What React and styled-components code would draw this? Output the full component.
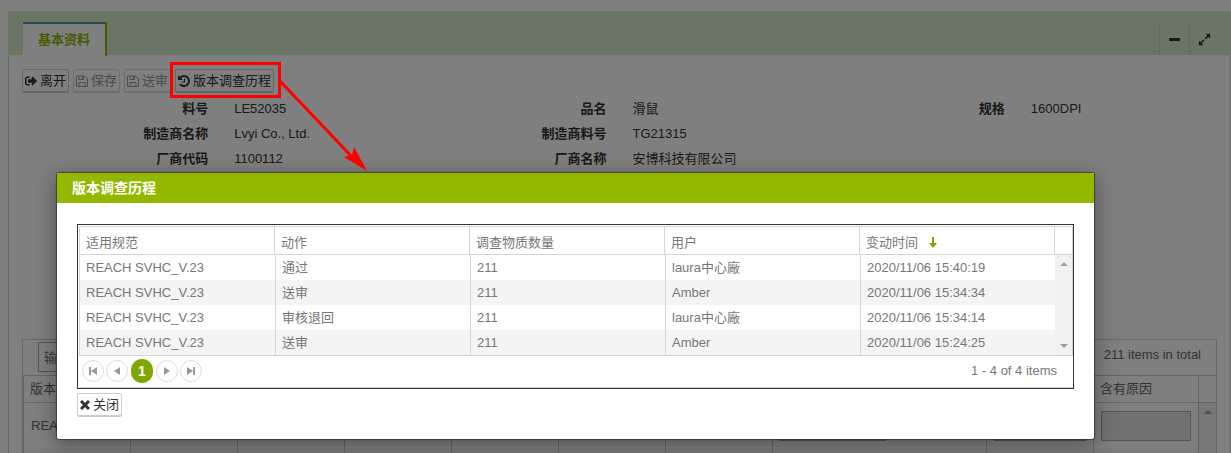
import React from "react";
import styled, { createGlobalStyle } from "styled-components";
import { FaSignOutAlt, FaExpandAlt } from "react-icons/fa";

const Global = createGlobalStyle`
  * { box-sizing: border-box; }
  html { height: 100%; }
  body {
    margin: 0;
    height: 100%;
    overflow: hidden;
    background: #fff;
    color: #333;
    font: 13px/18px "Liberation Sans", Arial, "Noto Sans CJK SC", sans-serif;
  }
  #root { height: 100%; }
  button, input { font: inherit; }
`;

const Page = styled.div`
  position: relative;
  height: 100%;
  overflow: hidden;
  padding: 11px 0 0 8px;
`;

const PanelHeader = styled.header`
  display: flex;
  align-items: flex-end;
  justify-content: space-between;
  height: 44px;
  padding: 0 12px 0 15px;
  background: #d4ecc8;
`;

const Tab = styled.button`
  height: 34px;
  margin-bottom: -1px;
  padding: 0 15px;
  border: 0;
  border-top: 2px solid #5a94ac;
  border-right: 2px solid #8fb400;
  background: #fff;
  color: #8fb400;
  font-weight: bold;
`;

const WindowTools = styled.div`
  display: flex;
`;

const ToolButton = styled.button`
  display: flex;
  align-items: center;
  justify-content: center;
  width: 30px;
  height: 32px;
  padding: 0;
  border: 0;
  border-left: 1px solid #c0d6b6;
  background: transparent;
  color: #333;
`;

const PanelBody = styled.main`
  height: 100%;
  padding: 13px;
  border: 1px solid #ccc;
  border-top-color: #fff;
`;

const Toolbar = styled.div`
  display: flex;
  gap: 4px;
`;

const Button = styled.button`
  display: flex;
  align-items: center;
  gap: 3px;
  height: 24px;
  padding: 0 2px;
  border: 1px solid #ccc;
  border-bottom-width: 2px;
  border-radius: 2px;
  background: #fff;
  color: #333;
  white-space: nowrap;

  &:disabled {
    border-color: #ddd;
    color: #999;
  }
`;

const Form = styled.dl`
  display: grid;
  grid-template-columns: repeat(3, 1fr);
  margin: 3px 0 0;
`;

const Field = styled.div`
  display: grid;
  grid-template-columns: 1fr 1fr;
  height: 25px;
  line-height: 25px;
`;

const FieldLabel = styled.dt`
  padding-right: 13px;
  text-align: right;
  font-weight: bold;
`;

const FieldValue = styled.dd`
  margin: 0;
  padding-left: 13px;
`;

const Detail = styled.section`
  margin-top: 168px;
  border: 1px solid #ccc;
`;

const DetailBar = styled.div`
  display: flex;
  justify-content: space-between;
  height: 35px;
  padding: 2px 15px;
  line-height: 26px;
  color: #666;
`;

const SearchInput = styled.input`
  width: 200px;
  height: 30px;
  padding: 0 5px;
  border: 1px solid #aaa;
  background: #fff;

  &::placeholder { color: #777; }
`;

const DetailTable = styled.table`
  width: 100%;
  table-layout: fixed;
  border-collapse: separate;
  border-spacing: 0;
  border-left: 1px solid #ccc;
  color: #666;

  th {
    height: 28px;
    padding: 0 6px;
    border: solid #ccc;
    border-width: 1px 1px 1px 0;
    text-align: left;
    font-weight: normal;
  }
  th:last-child { border-right: 0; }
  td {
    height: 46px;
    padding: 0 7px;
    border-right: 1px solid #ccc;
  }
  tr:nth-child(even) td { background: #f4f4f4; }
`;

const DetailScroll = styled.td`
  && {
    padding: 0;
    border: 0;
    background: #f1f1f1;
    vertical-align: top;
  }
`;

const CellInput = styled.input`
  display: block;
  width: 100%;
  max-width: 106px;
  height: 30px;
  border: 1px solid #aaa;
  background: #e4e4e4;
`;

const Backdrop = styled.div`
  position: absolute;
  inset: 0;
  background: rgba(0, 0, 0, 0.5);
`;

const Dialog = styled.section`
  position: absolute;
  top: 173px;
  left: 57px;
  right: 137px;
  background: #fff;
  border-radius: 2px;
  box-shadow: 0 0 1px 1px rgba(0, 0, 0, 0.4), 0 5px 20px 3px rgba(0, 0, 0, 0.3);
`;

const DialogTitle = styled.h2`
  height: 30px;
  margin: 0;
  padding: 0 15px;
  background: #92b900;
  color: #fff;
  font-size: 14px;
  line-height: 30px;
`;

const DialogBody = styled.div`
  padding: 21px 20px 22px;
`;

const Grid = styled.div`
  margin-bottom: 4px;
  padding: 1px 0 0 1px;
  border: 1px solid #333;
`;

const GridTable = styled.table`
  width: 100%;
  table-layout: fixed;
  border-collapse: separate;
  border-spacing: 0;
  border: 1px solid #d5d5d5;
  color: #777;

  th {
    height: 28px;
    padding: 4px 6px 0;
    border: solid #d5d5d5;
    border-width: 0 1px 1px 0;
    text-align: left;
    font-weight: normal;
  }
  th:last-child { border-right: 0; }
  td {
    height: 25px;
    padding: 0 6px;
    border-left: 1px solid #d5d5d5;
    line-height: 25px;
  }
  td:first-child { border-left: 0; }
  tr:nth-child(even) td { background: #f4f4f4; }
`;

const SortLabel = styled.span`
  display: flex;
  align-items: center;
  gap: 11px;
`;

const ScrollCell = styled.td`
  && {
    padding: 0;
    border: 0;
    background: #f1f1f1;
  }
`;

const ScrollTrack = styled.div`
  display: flex;
  flex-direction: column;
  align-items: center;
  justify-content: space-between;
  height: ${(p) => p.$height}px;
  padding: 7px 0;
`;

const Pager = styled.nav`
  display: flex;
  align-items: center;
  gap: 2px;
  height: 32px;
  padding: 0 16px 1px 3px;
  border-bottom: 1px solid #d5d5d5;
  color: #777;
`;

const PageButton = styled.button`
  display: flex;
  align-items: center;
  justify-content: center;
  width: 22px;
  height: ${(p) => (p.$current ? 24 : 22)}px;
  margin: 0 ${(p) => (p.$current ? 1 : 0)}px;
  padding: 0;
  border: ${(p) => (p.$current ? "0" : "1px solid #ddd")};
  border-radius: 12px;
  background: ${(p) => (p.$current ? "#7ea700" : "#fff")};
  color: ${(p) => (p.$current ? "#fff" : "#999")};
  font-size: 14px;
  font-weight: bold;
`;

const PagerInfo = styled.span`
  margin-left: auto;
`;

const Highlight = styled.div`
  position: absolute;
  top: 62px;
  left: 170px;
  width: 111px;
  height: 36px;
  border: 3px solid #f00;
`;

const Pointer = styled.svg`
  position: absolute;
  top: 78px;
  left: 278px;
`;

const Triangle = ({ down }) => (
  <svg width="8" height="4" viewBox="0 0 8 4" aria-hidden="true">
    <path d={down ? "M0 0H8L4 4Z" : "M0 4H8L4 0Z"} fill="#a0a0a0" />
  </svg>
);

const SaveIcon = () => (
  <svg width="12" height="12" viewBox="0 0 12 12" fill="none" stroke="currentColor" aria-hidden="true">
    <path d="M.5 1H8.5L11.5 4V11.5H.5Z" strokeLinejoin="round" />
    <path d="M3 1V4.5H7.5V1M3 11V7.5H9V11" />
    <path d="M6.5 1.5V4" />
  </svg>
);

const HistoryIcon = () => (
  <svg width="12" height="12" viewBox="0 128 1536 1536" fill="currentColor" aria-hidden="true">
    <path d="M1536 896q0 156-61 298t-164 245-245 164-298 61q-172 0-327-72.500t-264-204.500q-7-10-6.500-22.500t8.500-20.500l137-138q10-9 25-9 16 2 23 12 73 95 179 147t225 52q104 0 198.500-40.500t163.500-109.500 109.500-163.500 40.500-198.500-40.500-198.500-109.500-163.500-163.500-109.500-198.500-40.500q-98 0-188 35.500t-160 101.500l137 138q31 30 14 69-17 40-59 40h-448q-26 0-45-19t-19-45v-448q0-42 40-59 39-17 69 14l130 129q107-101 244.500-156.500t284.500-55.500q156 0 298 61t245 164 164 245 61 298z" />
    <path d="M896 608v448q0 14-9 23t-23 9h-320q-14 0-23-9t-9-23v-64q0-14 9-23t23-9h224v-352q0-14 9-23t23-9h64q14 0 23 9t9 23z" />
  </svg>
);

const CloseIcon = () => (
  <svg width="10" height="10" viewBox="0 0 10 10" stroke="currentColor" strokeWidth="3" aria-hidden="true">
    <path d="M1 1L9 9M9 1L1 9" />
  </svg>
);

const MinusIcon = () => (
  <svg width="11" height="3" viewBox="0 0 11 3" aria-hidden="true">
    <rect width="11" height="3" rx="1" fill="currentColor" />
  </svg>
);

const pagerShapes = {
  first: "M0 0H2V8H0ZM8 0V8L2 4Z",
  previous: "M7 0V8L1 4Z",
  next: "M1 0V8L7 4Z",
  last: "M6 0H8V8H6ZM0 0V8L6 4Z",
};

const PagerIcon = ({ shape }) => (
  <svg width="8" height="8" viewBox="0 0 8 8" fill="currentColor" aria-hidden="true">
    <path d={pagerShapes[shape]} />
  </svg>
);

const fields = [
  ["料号", "LE52035"],
  ["品名", "滑鼠"],
  ["规格", "1600DPI"],
  ["制造商名称", "Lvyi Co., Ltd."],
  ["制造商料号", "TG21315"],
  null,
  ["厂商代码", "1100112"],
  ["厂商名称", "安博科技有限公司"],
  null,
];

const history = [
  ["REACH SVHC_V.23", "通过", "211", "laura中心廠", "2020/11/06 15:40:19"],
  ["REACH SVHC_V.23", "送审", "211", "Amber", "2020/11/06 15:34:34"],
  ["REACH SVHC_V.23", "审核退回", "211", "laura中心廠", "2020/11/06 15:34:14"],
  ["REACH SVHC_V.23", "送审", "211", "Amber", "2020/11/06 15:24:25"],
];

const detailColumns = [
  { head: "版本", width: 107 },
  { width: 107 },
  { width: 107 },
  { width: 107 },
  { width: 107 },
  { width: 107 },
  { width: 107 },
  { width: 214, input: true },
  { width: 107, input: true },
  { head: "含有原因", input: true },
];

export default function App() {
  return (
    <Page>
      <Global />
      <PanelHeader>
        <Tab type="button">基本资料</Tab>
        <WindowTools>
          <ToolButton type="button" aria-label="minimize"><MinusIcon /></ToolButton>
          <ToolButton type="button" aria-label="expand"><FaExpandAlt size={13} /></ToolButton>
        </WindowTools>
      </PanelHeader>
      <PanelBody>
        <Toolbar>
          <Button type="button"><FaSignOutAlt size={12} />离开</Button>
          <Button type="button" disabled><SaveIcon />保存</Button>
          <Button type="button" disabled><SaveIcon />送审</Button>
          <Button type="button"><HistoryIcon />版本调查历程</Button>
        </Toolbar>
        <Form>
          {fields.map((f, i) => (
            <Field key={i}>
              {f && <FieldLabel>{f[0]}</FieldLabel>}
              {f && <FieldValue>{f[1]}</FieldValue>}
            </Field>
          ))}
        </Form>
        <Detail>
          <DetailBar>
            <SearchInput placeholder="输入" aria-label="search" />
            <span>211 items in total</span>
          </DetailBar>
          <DetailTable>
            <colgroup>
              {detailColumns.map((c, i) => <col key={i} width={c.width} />)}
              <col width="17" />
            </colgroup>
            <thead>
              <tr>
                {detailColumns.map((c, i) => <th key={i}>{c.head}</th>)}
                <th />
              </tr>
            </thead>
            <tbody>
              <tr>
                {detailColumns.map((c, i) => (
                  <td key={i}>
                    {i === 0 && "REACH"}
                    {c.input && <CellInput aria-label={c.head || "value"} />}
                  </td>
                ))}
                <DetailScroll rowSpan={2}>
                  <ScrollTrack $height={92}><Triangle /></ScrollTrack>
                </DetailScroll>
              </tr>
              <tr>{detailColumns.map((_, i) => <td key={i} />)}</tr>
            </tbody>
          </DetailTable>
        </Detail>
      </PanelBody>
      <Backdrop />
      <Dialog role="dialog" aria-labelledby="dialog-title">
        <DialogTitle id="dialog-title">版本调查历程</DialogTitle>
        <DialogBody>
          <Grid>
            <GridTable>
              <colgroup>
                <col /><col /><col /><col /><col />
                <col width="17" />
              </colgroup>
              <thead>
                <tr>
                  <th>适用规范</th>
                  <th>动作</th>
                  <th>调查物质数量</th>
                  <th>用户</th>
                  <th>
                    <SortLabel>
                      变动时间
                      <svg width="8" height="11" viewBox="0 0 8 11" aria-hidden="true">
                        <path d="M3 0H5V6H8L4 11L0 6H3Z" fill="#7ea700" />
                      </svg>
                    </SortLabel>
                  </th>
                  <th />
                </tr>
              </thead>
              <tbody>
                {history.map((row, r) => (
                  <tr key={r}>
                    {row.map((c, i) => <td key={i}>{c}</td>)}
                    {r === 0 && (
                      <ScrollCell rowSpan={4}>
                        <ScrollTrack $height={100}><Triangle /><Triangle down /></ScrollTrack>
                      </ScrollCell>
                    )}
                  </tr>
                ))}
              </tbody>
            </GridTable>
            <Pager>
              <PageButton type="button" aria-label="first"><PagerIcon shape="first" /></PageButton>
              <PageButton type="button" aria-label="previous"><PagerIcon shape="previous" /></PageButton>
              <PageButton type="button" $current>1</PageButton>
              <PageButton type="button" aria-label="next"><PagerIcon shape="next" /></PageButton>
              <PageButton type="button" aria-label="last"><PagerIcon shape="last" /></PageButton>
              <PagerInfo>1 - 4 of 4 items</PagerInfo>
            </Pager>
          </Grid>
          <Button type="button"><CloseIcon />关闭</Button>
        </DialogBody>
      </Dialog>
      <Highlight />
      <Pointer width="92" height="96" viewBox="0 0 92 96" aria-hidden="true">
        <path d="M2 3L76 81" stroke="#f00" strokeWidth="3" />
        <path d="M89 93L66 79L74 77L76 69Z" fill="#f00" />
      </Pointer>
    </Page>
  );
}
